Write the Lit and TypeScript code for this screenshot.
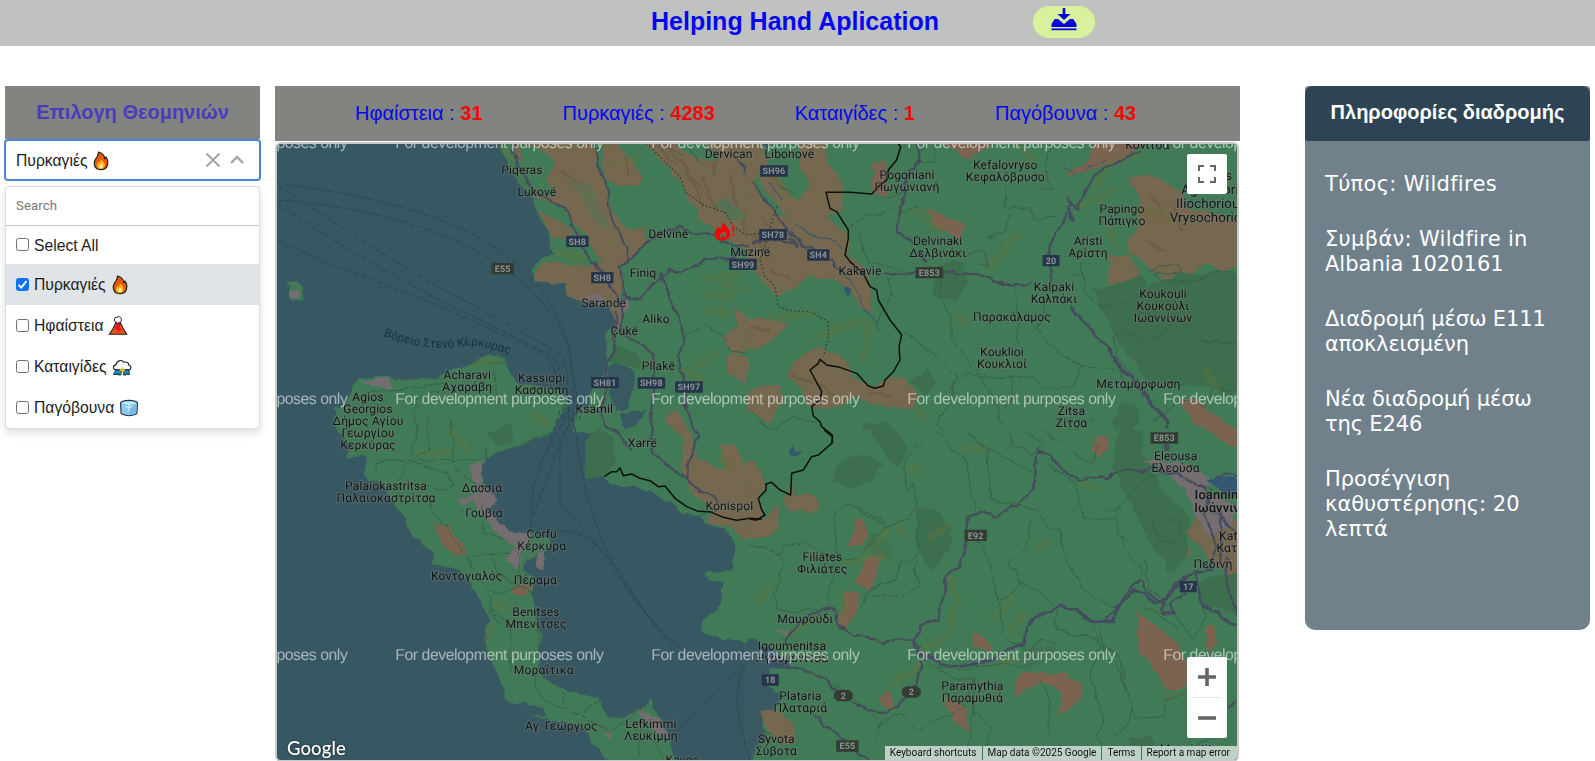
import { LitElement, html, svg, css } from "lit";
import { customElement, property } from "lit/decorators.js";

type Label = [number, number, string[], number?];
type Shield = [number, number, string, string];

const ROW = 36;

/* Place names: centre x, first baseline, lines, size. One unit is a third of a pixel. */
const labelsNW: Label[] = [
  [756, 282, ["Piqeras"]], [801, 348, ["Lukovë"]], [1376, 233, ["Dervican"]],
  [1195, 474, ["Delvinë"]], [1441, 528, ["Muzinë"]], [1119, 591, ["Finiq"]],
  [1001, 681, ["Sarandë"]], [1158, 728, ["Aliko"]], [1063, 765, ["Çukë"]],
  [1165, 869, ["Pllakë"]], [592, 897, ["Acharavi", "Αχαράβη"]], [815, 906, ["Kassiopi", "Κασσιόπη"]],
  [973, 999, ["Ksamil"]],
  [294, 963, ["Agios", "Georgios", "Δήμος Αγίου", "Γεωργίου", "Κερκύρας"]],
];
const labelsNE: Label[] = [
  [118, 84, ["Libohovë"]], [471, 147, ["Pogoniani", "Πωγωνιανή"]], [766, 117, ["Kefalovryso", "Κεφαλόβρυσο"]],
  [1192, 58, ["Κόνιτσα"]], [1116, 249, ["Papingo", "Πάπιγκο"]], [1014, 345, ["Aristi", "Αρίστη"]],
  [563, 345, ["Delvinaki", "Δελβινάκι"]], [330, 435, ["Kakavie"]], [912, 483, ["Kalpaki", "Καλπάκι"]],
  [786, 573, ["Παρακάλαμος"]], [1239, 504, ["Koukouli", "Κουκούλι", "Ιωαννίνων"]],
  [756, 678, ["Kouklioi", "Κουκλιοί"]], [1165, 775, ["Μεταμόρφωση"]], [964, 856, ["Zitsa", "Ζίτσα"]],
];
const labelsSW: Label[] = [
  [1117, 111, ["Xarrë"]], [348, 240, ["Palaiokastritsa", "Παλαιοκαστρίτσα"]], [636, 246, ["Δασσιά"]],
  [642, 321, ["Γουβιά"]], [815, 384, ["Corfu", "Κέρκυρα"]], [590, 510, ["Κοντογιαλός"]],
  [796, 522, ["Πέραμα"]], [798, 618, ["Benitses", "Μπενίτσες"]], [821, 792, ["Μοραΐτικα"]],
  [874, 960, ["Αγ. Γεώργιος"]], [1143, 954, ["Lefkimmi", "Λευκίμμη"]], [1237, 1062, ["Κavos"]],
  [1378, 300, ["Konispol"]],
];
const labelsSE: Label[] = [
  [1277, 90, ["Eleousa", "Ελεούσα"]], [217, 393, ["Filiates", "Φιλιάτες"]], [166, 579, ["Μαυρούδι"]],
  [126, 660, ["Igoumenitsa", "Ηγουμενίτσα"]], [151, 810, ["Plataria", "Πλαταριά"]], [79, 939, ["Syvota", "Σύβοτα"]],
  [667, 780, ["Paramythia", "Παραμυθιά"]], [1389, 413, ["Πεδινή"]], [1327, 969, ["Mousiotitsa"]],
];
const shieldsNW: Shield[] = [
  [922, 484, "SH8", "sh"], [997, 593, "SH8", "sh"], [698, 566, "E55", "e"], [1419, 553, "SH99", "sh"],
  [1005, 908, "SH81", "sh"], [1144, 909, "SH98", "sh"], [1257, 921, "SH97", "sh"],
];
const shieldsNE: Shield[] = [
  [72, 123, "SH96", "sh"], [69, 314, "SH78", "sh"], [205, 375, "SH4", "sh"],
  [538, 428, "E853", "e"], [903, 392, "20", "sh"],
];
const shieldsSE: Shield[] = [
  [1243, 24, "E853", "e"], [677, 316, "E92", "e"], [1315, 470, "17", "sh"],
  [61, 750, "18", "sh"], [292, 948, "E55", "e"], [280, 797, "2", "e"], [484, 786, "2", "e"],
];

const drawLabels = (list: Label[]) => list.map(([x, y, lines, size]) =>
  lines.map((t, i) => svg`<text class="place" x=${x} y=${y + i * ROW} font-size=${size ?? 36.5}>${t}</text>`));

const drawShields = (list: Shield[]) => list.map(([x, y, t, kind]) => {
  const w = t.length * 16 + 19;
  const plate = t.length === 1
    ? svg`<path class="shield e" d="M${x - 28} ${y - 8}L${x - 16} ${y - 17}H${x + 16}L${x + 28} ${y - 8}V${y + 8}L${x + 16} ${y + 17}H${x - 16}L${x - 28} ${y + 8}Z"></path>`
    : svg`<rect class="shield ${kind}" x=${x - w / 2} y=${y - 17} width=${w} height="34" rx="2"></rect>`;
  return svg`${plate}<text class="shield-text" x=${x} y=${y + 10}>${t}</text>`;
});

@customElement("hazard-icon")
export class HazardIcon extends LitElement {
  @property() kind = "fire";
  static styles = css`
    :host { display: inline-block; width: 20px; height: 20px; }
    svg { display: block; width: 20px; height: 20px; }
  `;
  render() {
    const art: Record<string, unknown> = {
      fire: svg`<path d="M7.5 1.2C11.5 2 13.6 5 13.7 7.5L15 6.2C17 9 17.2 12 16.3 14.7C15.2 17.5 12.8 18.7 10 18.7C6.3 18.7 3.6 16.4 3.3 12.8C3 9.5 4.5 8 6 6C7 4.5 7.6 3 7.5 1.2Z" fill="#e8590c" stroke="#221" stroke-width="1.2"/>
        <path d="M9.8 8.5C12.6 10 14 12.4 13.7 14.5C13.4 17 11.7 18 9.8 18C7.5 18 5.9 16.6 6 14.4C6.1 12.7 7.2 11.9 7.5 10.6L9 12Z" fill="#ffb31a"/>
        <path d="M10 12.5C11.8 14 12 15.3 11.6 16.4C11 17.6 8.8 17.7 8.2 16.3C7.8 15 9 14 10 12.5Z" fill="#fff0a0"/>`,
      volcano: svg`<path d="M1.3 18.3L4.8 13L8 6.5H12.2L15.5 13L18.7 18.3Z" fill="#e8501c" stroke="#221" stroke-width="1.1"/>
        <path d="M8.6 6.5H11.5L12 11L13.5 15L11.5 14L10.5 17L8.7 12.5L6.8 14.2Z" fill="#e8102c"/>
        <path d="M6.5 4.8C5.6 2.2 7.7 .8 9 1.4C10.5 0 13 .8 13.1 2.7C14.3 4.4 13 6 11.8 5.8L12.1 8.2L10.5 6.6L9 7.8L8.3 5.9C7.5 6.1 6.8 5.7 6.5 4.8Z" fill="#fff" stroke="#222" stroke-width="1"/>`,
      storm: svg`<path d="M3.8 12.8C.6 12.3.8 8.2 4 7.9C4.2 4 9.5 1.9 12 5.3C15 4.2 17 6 16.6 8C20 8.7 19.3 12.9 16.5 12.9Z" fill="#fff" stroke="#222" stroke-width="1.1"/>
        <path d="M3.8 13L1.5 17.5H5.5L6 16L6.5 18H9L9.5 13ZM12 13L11.5 18H14L14.6 16L15.5 17.6H17.5L16.8 13Z" fill="#129ac5" stroke="#123" stroke-width=".9"/>
        <path d="M11.5 9L7 14H10L8.5 18L13.8 12.4H10.8Z" fill="#fcc21b"/>`,
      ice: svg`<path d="M3 3.6Q10 1.2 17 3.6Q18.6 4.2 18.5 6L18 14.5Q18 15.8 16.8 16.3Q10 19.2 3.2 16.3Q2 15.8 2 14.5L1.5 6Q1.4 4.2 3 3.6Z" fill="#8cc9ee" stroke="#234" stroke-width="1.1"/>
        <path d="M2.8 5Q10 2.2 17.2 5Q10 8 2.8 5Z" fill="#c5e9fa"/><path d="M10.5 8V17.3Q14 17 17 15.3L17.6 6.4Q14 8 10.5 8Z" fill="#79b9e6"/>
        <path d="M10 6V13M6.5 8.5L10 9.6L13.5 8.5" stroke="#e2f6ff" stroke-width="1" fill="none"/>`,
    };
    return html`<svg viewBox="0 0 20 20">${art[this.kind]}</svg>`;
  }
}

@customElement("hazard-select")
export class HazardSelect extends LitElement {
  static styles = css`
    :host { display: block; width: 257px; font: 15.7px/20px "Liberation Sans", Arial, sans-serif; color: #1c1c1c; }
    .title { margin: 0 1px; height: 53px; display: flex; align-items: center; justify-content: center; background: #82847f;
      color: #4a3cbe; font-size: 20px; font-weight: 700; }
    .title span { display: block; padding-bottom: 2px; }
    .box { box-sizing: border-box; height: 42px; border: 2px solid #4c83dc; border-radius: 4px; display: flex; align-items: center;
      padding: 0 14px 0 10px; background: #fff; }
    .box .value { flex: 1; display: flex; align-items: center; gap: 4px; padding-top: 1px; }
    .box svg { display: block; }
    .box .arrow { margin-left: 8px; }
    .list { margin: 5px 1px 0; border: 1px solid #dcdcdc; border-radius: 4px; box-shadow: 0 4px 10px rgba(0,0,0,.13); background: #fff; overflow: hidden; }
    .search { height: 36px; display: flex; align-items: center; padding: 0 0 2px 10px; border-bottom: 1px solid #c8c8c8;
      color: #777; font: 13.2px Roboto, sans-serif; letter-spacing: .1px; }
    .row { height: 41px; display: flex; align-items: center; padding-left: 10px; }
    .row.first { height: 38px; }
    .row.on { background: #e0e3e8; }
    .row .name { padding-top: 1px; }
    .check { box-sizing: border-box; width: 13px; height: 13px; border: 1px solid #707070; border-radius: 2.5px; background: #fff; margin: 0 5px 1px 0; }
    .check.on { background: #0b74f5; border-color: #0b74f5; }
    .check svg { display: block; width: 11px; height: 11px; }
    hazard-icon { margin: 1px 0 0 5px; }
    .box hazard-icon { margin: 0; }
  `;
  private rows = [
    { name: "Πυρκαγιές", icon: "fire", on: true },
    { name: "Ηφαίστεια", icon: "volcano", on: false },
    { name: "Καταιγίδες", icon: "storm", on: false },
    { name: "Παγόβουνα", icon: "ice", on: false },
  ];
  render() {
    return html`
      <div class="title"><span>Επιλογη Θεομηνιών</span></div>
      <div class="box">
        <span class="value">Πυρκαγιές <hazard-icon kind="fire"></hazard-icon></span>
        <svg width="16" height="16" viewBox="0 0 16 16" fill="none" stroke="#a5a5a5" stroke-width="2"><path d="M1.5 1.5L14.5 14.5M14.5 1.5L1.5 14.5"/></svg>
        <svg class="arrow" width="16" height="16" viewBox="0 0 16 16" fill="none" stroke="#a5a5a5" stroke-width="2.4"><path d="M2 11L8 5L14 11"/></svg>
      </div>
      <div class="list">
        <div class="search">Search</div>
        <div class="row first"><span class="check"></span><span class="name">Select All</span></div>
        ${this.rows.map((r) => html`<div class="row ${r.on ? "on" : ""}">
          <span class="check ${r.on ? "on" : ""}">${r.on ? html`<svg viewBox="0 0 11 11" fill="none" stroke="#fff" stroke-width="1.9"><path d="M1.5 5.8L4.2 8.5L9.5 2.2"/></svg>` : ""}</span>
          <span class="name">${r.name}</span><hazard-icon kind=${r.icon}></hazard-icon></div>`)}
      </div>`;
  }
}

@customElement("hazard-map")
export class HazardMap extends LitElement {
  static styles = css`
    :host { display: block; position: relative; box-sizing: border-box; width: 964px; height: 620px; margin-top: 1px;
      border: 2px solid #c8cac9; border-radius: 6px; overflow: hidden; background: #375862; }
    .canvas { display: block; width: 960px; height: 616px; text-rendering: geometricPrecision; }
    .land { fill: #417a57; }
    .sea { fill: #375862; }
    .lake { fill: #345772; }
    .brown { fill: #766750; }
    .rust { fill: #7b644f; }
    .dark { fill: #3e6e4e; }
    .town { fill: #746d70; }
    .hill { fill: none; stroke: #66763a; stroke-width: 22; opacity: .34; stroke-linecap: round; }
    .ridge { fill: none; stroke: #5f5b43; stroke-width: 8; opacity: .45; }
    .stream { fill: none; stroke: #36586a; stroke-width: 4; opacity: .8; }
    .local { fill: none; stroke: #38604a; stroke-width: 3; }
    .road { fill: none; stroke: #454c5c; stroke-width: 6.5; stroke-linejoin: round; }
    .high { fill: none; stroke: #454c5f; stroke-width: 9; stroke-linejoin: round; }
    .border { fill: none; stroke: #0b100d; stroke-width: 4.5; stroke-linejoin: round; }
    .dots { fill: none; stroke: #2a3a31; stroke-width: 3.5; stroke-dasharray: 5 7; }
    .ferry { fill: none; stroke: #2a4652; stroke-width: 2.8; stroke-dasharray: 17 8; }
    .place { font-family: Roboto, "Noto Sans", sans-serif; fill: #121515; text-anchor: middle; letter-spacing: .25px;
      paint-order: stroke; stroke: rgba(125,130,125,.38); stroke-width: 7px; stroke-linejoin: round; }
    .strait { font: 35px Roboto, sans-serif; fill: #17303c; letter-spacing: .3px; }
    .sh { fill: #26364a; }
    .e { fill: #333c30; }
    .shield-text { font: 700 27px Roboto, sans-serif; fill: #8c9296; text-anchor: middle; letter-spacing: .4px; }
    .mark { font: 15.8px "Liberation Sans", Arial, sans-serif; fill: rgba(255,255,255,.55); }
    .control { position: absolute; right: 10px; width: 40px; background: #fff; border-radius: 2px; }
    .full { top: 10px; height: 40px; display: grid; place-items: center; }
    .zoom { top: 513px; height: 81px; display: grid; grid-template-rows: 40px 1px 40px; justify-items: center; align-items: center; }
    .zoom i { width: 30px; height: 1px; background: #e6e6e6; }
    .google { position: absolute; left: 10px; bottom: 1px; color: #fff; font: 500 18.5px/22px Lato, sans-serif; text-shadow: 0 0 3px rgba(0,0,0,.6); letter-spacing: .1px; }
    .legal { position: absolute; right: 0; bottom: 0; height: 14px; display: flex; gap: 1px; font: 10px/14px Roboto, sans-serif; color: #111; }
    .legal span { background: rgba(196,214,202,.95); padding: 0 5px; }
    .legal span:last-child { padding-right: 7px; }
  `;
  render() {
    const marks = [148, 404, 660].flatMap((y) => [139.3, 395.3, 651.3, 907.3, 1163.3].map((x) => svg`<text class="mark" x=${x} y=${y} textLength="208.5">For development purposes only</text>`));
    return html`
      <svg class="canvas" viewBox="277 144 960 616">
        <defs>
          <filter id="rough" x="-2%" y="-2%" width="104%" height="104%"><feTurbulence type="fractalNoise" baseFrequency=".07" numOctaves="3" seed="4"/><feDisplacementMap in="SourceGraphic" scale="8" xChannelSelector="R" yChannelSelector="G"/></filter>
        </defs>
        <g filter="url(#rough)">
          <g transform="translate(270 80) scale(.33333)">
            <path class="land" d="M685 150L710 240L745 310L790 350L800 400L835 450L848 520L815 535L785 570L790 595L885 612L895 645L930 665L1000 660L1032 690L1035 740L1010 760L1005 800L1015 870L975 910L950 975L920 985L915 1060H1500V150Z"/>
            <path class="land" d="M205 1060L192 1020L222 970L240 930L270 895L340 890L400 905L440 890L500 895L540 870L600 860L655 820L710 835L720 880L740 910L800 915L850 930L892 950L870 1010L850 1060Z"/>
            <path class="land" d="M50 608L75 602L102 620L103 640L95 662L62 655Z"/><path class="town" d="M60 635L90 632L92 655L62 652Z"/>
            <path class="sea" d="M1035 845L1090 868L1102 900L1085 940L1070 1000L1045 1012L1030 975L1015 930L1012 875Z"/>
            <path class="dark" d="M1035 795L1085 815L1110 840L1110 865L1050 848L1020 850Z"/>
            <path class="brown" d="M728 190H970L990 280L1010 340L1030 400L1080 450L1120 440L1135 480L1080 540L1040 560L1060 620L1040 660L1055 700L1060 760L1030 720L1020 675L930 665L895 645L885 612L845 612L790 592L810 555L850 542L960 560L995 550L970 500L910 420L870 380L800 350L830 320L790 280L740 240Z"/>
            <path class="brown" d="M800 390L880 425L905 450L900 480L850 470Z"/><path class="brown" d="M1000 190H1040L1110 270L1110 310L1050 320L1000 290Z"/>
            <path class="land" d="M745 200L800 195L850 250L830 300L860 350L800 340L760 290Z"/>
            <path class="land" d="M900 300L960 310L1000 400L1030 460L990 440L940 370Z" opacity=".35"/>
            <path class="brown" d="M1130 190H1500V545L1440 535L1400 490L1340 455L1290 410L1250 360L1230 300L1180 250Z"/>
            <path class="land" d="M1210 190L1260 220L1310 245L1350 235L1310 190ZM1430 255L1500 220V310L1460 300Z"/>
            <path class="land" d="M1330 380L1410 430L1430 410L1360 350Z" opacity=".6"/>
            <path class="brown" d="M1390 680L1500 740V820H1390L1350 780L1400 740Z"/><path class="brown" d="M1375 820L1430 830L1440 870L1500 890V960L1440 950L1420 900L1370 880Z"/><path class="brown" d="M1190 985L1230 1000L1220 1040L1180 1030Z"/>
            <path class="town" d="M1040 665L1075 655L1078 690L1050 700ZM270 900L350 895L370 925L310 920ZM930 650L1000 645L1010 670L940 668Z"/>
            <path class="hill" d="M1040 250L1100 235M1300 600L1400 580M1310 640L1380 650M1320 690L1370 700M860 520L940 535M700 205L730 230M1290 850L1330 820M620 850L680 840M1360 610L1440 640M1250 870L1290 900"/>
            <path class="ridge" d="M1160 200L1220 260M1200 210L1270 300M1260 280L1300 380M1300 290L1340 400M1380 280L1400 380M1440 350L1420 450M1340 215L1330 280M1180 190L1240 230M1230 240L1300 330M870 270L930 310M1060 230L1080 290"/>
            <path class="local" d="M1245 770L1310 735L1350 760L1380 810L1470 820M650 850L710 845L720 870M280 940L400 925L520 910M1250 190L1300 260M430 1020L440 960L520 930M670 870L680 920L690 1020M1000 1010L1040 950"/>
            <path class="road" d="M740 190L730 215L745 260L765 290L780 320L870 380L905 410L912 460L945 510L990 570L1040 640L1060 690L1055 740L1070 770L1150 815V860L1148 1060M1040 690L1035 770L1030 820L1010 855L1000 960L1000 1060M980 190L980 240L1010 330L1020 410L1060 480L1075 545L1045 560L1060 640L1080 660L1110 655L1165 600L1200 570L1260 570L1300 540L1380 535L1470 490M1075 540L1120 500L1160 465L1230 440L1280 465L1340 460L1350 485L1430 500L1480 480M1170 580L1190 640L1225 710L1245 780L1220 830L1240 880L1255 1060M1400 240L1440 290L1480 350"/>
          </g>
          <g transform="translate(270 410) scale(.33333)">
            <path class="land" d="M190 0L215 60L235 110L232 140L290 140L275 190L290 215L340 222L365 270L385 300L400 320L420 370L490 430L490 462L570 480L615 540L640 590L660 630L645 660L660 740L690 810L710 870L760 895L790 920L850 930L930 945L985 1020L1020 1060H1215L1200 990L1150 890L1140 860L1120 895L1040 930L1010 925L985 862L930 850L840 820L800 770L815 690L800 610L790 550L790 500L760 480L780 440L800 430L800 470L820 480L825 430L840 390L790 375L740 370L680 335L650 310L675 270L640 215L635 180L650 150L700 125L780 95L830 80L855 40L850 0Z"/>
            <path class="sea" d="M720 882L770 875L820 900L835 920L790 915Z"/>
            <path class="land" d="M920 0L930 40L980 45L980 60L950 90L945 205L1000 205L1015 222L1090 230L1150 250L1195 270L1240 310L1285 318L1310 345L1360 350L1400 400L1385 480L1300 490L1310 510L1360 520L1345 600L1310 620L1290 660L1360 690L1440 698L1500 690V0Z"/>
            <path class="sea" d="M1050 10L1130 0L1110 40L1060 60Z"/>
            <path class="dark" d="M950 90L990 50L1030 90L1035 160L1000 205L945 205Z"/><path class="dark" d="M650 65L720 45L728 95L680 110Z"/>
            <path class="brown" d="M1180 20L1220 0L1270 80L1280 150L1370 180L1350 100L1400 110L1420 160L1500 190V350L1430 390L1370 345L1310 340L1330 300L1260 240L1240 190L1240 90Z"/>
            <path class="rust" d="M490 345L530 350L580 400L590 425L560 435L520 410ZM720 540L760 520L790 530L780 555L730 550Z"/>
            <path class="town" d="M600 170L640 155L632 215L680 270L650 300L690 340L740 370L780 375L760 430L750 480L700 450L740 410L690 380L640 320L610 270L570 285L565 265L620 250ZM795 430L825 430L820 480L800 470ZM1000 960L1030 965L1020 985ZM1100 900L1160 920L1200 990L1150 960Z"/>
            <path class="hill" d="M450 130L530 125M800 20L835 40M540 60L600 120M680 580L710 600M670 650L650 690M1350 130L1380 180"/>
            <path class="local" d="M430 0L440 60L420 150L320 155L325 200M480 0L470 60L480 120L430 150M540 30L550 100L540 150L440 155M540 155L650 145L760 100L830 75M650 145L640 110M380 210L420 155L530 190L555 230L510 240L470 225M540 150L560 180L640 230M470 260L490 310L560 400L600 440L660 430L720 430L750 410M640 280L640 370L700 390M590 440L620 490L650 540L700 545L750 530L790 550M660 430L690 500L750 530V430M660 550L665 600L720 640L720 780M800 600L810 750M655 600L690 640M800 770L790 830L830 880L860 890L940 920L1020 965L1060 940L1110 900M880 890L890 850L850 810M940 910L990 870M1100 1050L1110 940M1190 1060L1130 960M1280 320L1340 300"/>
            <path class="road" d="M990 0L1000 40L1030 60L1070 105L1090 125M1145 0V60L1140 110L1170 150L1240 200L1290 245L1350 270M1250 0L1285 80L1260 140L1250 205"/>
          </g>
          <g transform="translate(750 130) scale(.33333)">
            <path class="land" d="M0 0H1500V940H-10V0Z"/>
            <path class="brown" d="M-10 0H20L60 120L100 160L120 200L180 260L240 270L290 310L300 380L350 420L370 550L320 510L260 450L190 440L80 500L30 440L-10 410Z"/>
            <path class="brown" d="M150 30H220L230 100L280 160L275 240L220 270L180 290L120 200L150 210L175 170L150 110Z"/>
            <path class="land" d="M20 120L50 180L110 260L80 250L10 170Z"/>
            <path class="rust" d="M530 230L580 255L640 290L635 330L600 310L560 295ZM580 40H730L650 90ZM1030 30H1190L1130 80L1060 110L950 140L950 125L1020 100ZM370 100L410 90V200L365 190Z"/>
            <path class="brown" d="M1130 150L1190 130L1290 180L1310 230L1500 280V400L1420 420L1370 400L1320 440L1240 450L1190 400L1140 370L1130 340L1160 300L1170 200ZM1080 380L1130 370L1170 420L1150 510L1130 515L1070 460ZM160 670L210 650L290 690L310 750L330 800L230 840L180 830L150 770L110 730ZM-10 570L120 575L80 620L20 660L-10 655ZM20 770L90 765L100 810L60 880L-10 840V790ZM310 740L370 775L420 740L470 750L510 800L480 840L390 830L320 800Z"/>
            <path class="rust" d="M1290 810L1330 800L1400 860L1470 900V940L1330 880Z"/>
            <path class="dark" d="M540 480L570 400L640 390L655 450L620 510L560 500Z"/><path class="dark" d="M1030 480L1170 440L1190 470L1290 430L1350 430L1420 420L1500 450V760L1440 800L1380 770L1200 760L1150 700L1090 610Z"/><path class="dark" d="M1110 820L1150 810L1170 850L1150 900L1180 940H1100L1090 880ZM340 880L410 870L440 900L430 940H350ZM480 760L530 710L560 760L530 790Z"/>
            <path class="hill" d="M1040 170L1080 100L1170 70M990 230L1080 180M1150 240L1230 250M720 410L800 320M490 240L570 290M620 560L640 580M200 620L290 580M340 690L360 580M60 560L180 550M1080 290L1090 340M1370 730L1400 770M500 840L530 860M60 130L120 200M250 600L340 570M800 40L850 90M1380 130L1440 160"/>
            <path class="ridge" d="M30 260L90 330M10 310L60 380M60 420L120 450M120 730L190 760M200 760L260 800M350 790L430 800M1200 190L1240 250M1270 230L1300 300M1190 330L1250 370M0 590L60 600"/>
            <path class="lake" d="M280 470L300 480L298 495L280 490ZM30 45H60L50 60Z"/>
            <path class="stream" d="M140 285L180 312L250 330L275 360M270 420L330 490L360 560L390 605M60 160L100 210M940 105L975 138M1010 118L1070 95"/>
            <path class="local" d="M130 190L70 150M400 200L450 190L500 90L550 100L560 40M300 290L340 260L430 240M440 250L500 230L520 250M500 60L530 50M770 160L760 230L830 240L870 270L920 260M870 180L910 180L890 130L900 40M640 380L700 360L720 410L690 400M710 320L770 310L775 250M330 300L350 390L440 420L490 430M410 440L430 500L390 550L380 590M800 470L800 560L810 650M570 440L570 500L600 560L600 620L650 690L690 740L720 790L760 880L800 940M455 610L540 660L620 740L590 830L560 880L620 940M690 740L650 730L600 780M870 600L900 650L990 710L970 770L880 780L850 740L700 740L680 710M990 710L1110 720L1120 750M990 400L1000 460L1030 520L1060 530L1120 520L1200 560M1090 620L1120 600L1190 640L1290 570L1350 630L1460 640M1090 620L1100 680L1150 740M1210 870L1300 810L1360 830L1400 770L1460 790M780 730L790 800L760 840M0 840L60 900L130 860L200 880M890 470L880 560L860 600M960 430L1000 440M1200 420L1280 400L1290 430L1210 430L1230 450L1310 460L1410 420L1460 430M980 940L970 900L1030 860"/>
            <path class="road" d="M0 150L50 210L90 270L130 320L170 350L240 390L270 415M500 40L510 90L475 130L455 220L440 300L490 340M400 430L430 440L490 428L650 430L690 440L760 465L810 465L850 462M900 450L895 350L930 290L950 250M530 400L510 360M0 340L60 330L130 340M1170 60L1040 130L1000 190L985 240L945 200"/>
            <path class="high" d="M960 225V275M955 530L1020 590L1060 640L1120 720L1150 750L1180 800L1250 870V940M120 325L150 350"/>
          </g>
          <g transform="translate(750 430) scale(.33333)">
            <path class="land" d="M0 0H1500V1010H-10V0Z"/>
            <path class="sea" d="M-10 620L20 630L50 665L100 690L120 715L60 715L50 760L90 800L70 845L35 845L45 920L20 950L5 1010H-10Z"/>
            <path class="brown" d="M-10 90L20 95L45 170L25 200L45 270L80 225L85 300L60 320L-10 325ZM100 205L170 190L210 210L210 240L180 250L100 230ZM120 150L135 195L110 200ZM30 840L80 845L130 880L135 930L100 950L50 900Z"/>
            <path class="rust" d="M320 260L345 270L360 320L340 350L295 345ZM360 375L400 370L375 440L360 480L315 460ZM290 490L330 485L315 560L290 600L255 590ZM670 600L730 650L720 665L665 650ZM380 800L410 780L435 800L430 845L395 830ZM1160 550L1210 580L1280 640L1310 700L1330 740L1290 780L1240 775L1220 730L1165 660ZM1370 590L1395 585L1400 640L1385 670L1368 640ZM790 790L810 730L870 725L950 730L1000 770L990 810L920 860L940 790L890 755L840 770L800 800ZM585 800L650 830L660 900L630 890L590 830ZM1370 0H1470V55L1420 40ZM1210 205L1240 195L1258 215L1215 260ZM1270 300L1310 320L1320 370L1300 395L1240 350L1270 340ZM1035 25L1065 20L1075 60L1045 85L1025 60ZM1430 380L1470 390V440L1430 460Z"/>
            <path class="dark" d="M250 110L340 70L400 100L370 150L330 170L250 160ZM360 0H440L480 60L450 110L400 70ZM500 230L560 240L605 300L600 360L545 420L500 350ZM1105 0H1180V70L1230 170L1320 260L1310 380L1270 440L1200 340L1130 200L1090 120ZM1340 460L1470 420V560L1360 520ZM1140 920L1200 915L1220 950H1140Z"/>
            <path class="dark" opacity=".6" d="M360 310L400 320L430 350L420 390L380 380L350 360ZM820 650L920 640L900 700L820 720Z"/>
            <path class="brown" d="M1340 250L1400 240L1470 280V420L1400 410L1360 360L1310 310Z"/><path class="town" d="M1160 90L1210 90L1330 110L1370 140L1380 190L1460 230L1440 290L1380 320L1340 260L1300 170L1230 110ZM80 605L125 600L110 620ZM1345 120L1390 150L1370 200L1310 170Z"/>
            <path class="lake" d="M1370 150L1400 135L1460 150V200L1410 180ZM110 70L125 50L130 65L155 65L140 78ZM20 640L100 680L125 715L60 710Z"/>
            <path class="hill" d="M600 450L630 520M610 540L600 590M280 500L270 580M410 310L350 360M480 130L500 110M440 290L460 310M590 620L520 660M780 600L820 550M520 700L430 760M290 400L400 380M120 610L200 560M730 560L780 500M860 350L890 340M1250 800L1290 790M640 50L700 60M540 320L590 290M60 470L30 520M1000 160L1040 180M760 700L790 690"/>
            <path class="local" d="M0 345L90 370L110 340L170 340L210 370L260 385L320 385L410 290L340 250L300 220L250 240L260 380L230 530L140 545L80 540L75 470L100 400L90 370M410 290L470 270L500 230L490 160L465 180L470 90L540 0M300 220L410 280M500 230L505 380L490 430L510 470L450 500L360 495M560 0L600 50L650 90L660 180L680 240M500 380L450 400L440 450L370 470L320 540M650 10L710 60L720 210L780 220L860 240L890 290L930 300L940 370L990 470L1070 520L1100 530M690 40L860 130M830 0L880 50L840 70L790 50L780 0M670 310L720 400L740 490L760 600L790 640L830 660L870 630L920 640M750 510L820 460L900 510L920 530M840 270L830 350L780 400L820 470M900 110L980 160L1000 260L1100 270L1120 350L1180 430M880 0L960 60L1020 100L1050 40M1100 270L1105 230L1180 150L1230 130M1120 230L1060 240M1210 260L1220 330L1280 340L1300 280L1210 270M1180 390L1200 470L1280 560L1330 630L1370 560L1350 500M1030 590L1050 650L1020 720L1060 880L1040 920L1080 980M1050 590L1060 650L1100 700L1150 830L1130 890L1080 930M920 540V600L1010 620L1110 680L1130 780L1160 860L1240 860L1250 810L1310 790M0 880L60 910M380 930L390 870L300 800L250 760M500 670L600 740L670 750L640 830L500 900L450 850L380 890M670 740L670 860L650 960M670 850L720 890L710 960M870 750L900 800L890 900L920 940L980 990M1380 920L1300 970M540 680L570 710L640 720L740 700L820 710M1180 520L1280 590M1300 150L1390 180L1370 240L1420 260"/>
            <path class="road" d="M105 640L130 590L190 550L225 530L255 545L255 585L300 605L310 615L370 625L400 640L440 625L490 630L510 595L540 570L565 575L590 440L625 410L650 330L655 260L710 245L740 262L780 230L805 232L840 190L855 150L862 65L900 75L940 125L990 145L1040 135L1070 145L1120 115L1180 125L1210 115L1300 140L1370 180L1380 230M500 650L520 710L500 760L440 830L405 850L300 820L250 770L160 715L100 710L60 680M190 855L280 930L360 1000M1330 430L1230 520L1170 450L1130 490L1070 570M1310 490L1260 520L1270 550L1240 550L1240 500M1430 380V460L1460 560M1360 240L1400 350L1370 420M1400 240L1420 290L1410 400M1400 140L1430 130L1470 150M1460 810L1400 850M1400 240L1470 330M1250 40V60"/>
            <path class="high" d="M490 630L500 665L600 710L690 700L720 685L790 655L820 640L830 590L870 555L930 525L980 540L1030 575L1090 578L1100 530L1150 485L1190 490L1220 525L1260 480L1330 430L1390 420M1335 430L1350 510L1400 550L1460 590M650 270H660"/>
          </g>
        </g>
        <g transform="translate(270 80) scale(.33333)">
          <path class="ferry" d="M22 310C260 340 470 390 620 470C790 560 870 700 890 780C910 870 925 960 930 1020M22 360C250 375 520 440 680 550C820 640 880 740 900 820L920 1020M22 315C200 430 400 570 600 670L870 820Q900 850 895 1020M22 370C180 480 370 590 550 680L850 830Q880 870 880 1020M22 480C200 570 440 640 620 730L800 810Q860 840 865 930"/>
          <path id="straitline" fill="none" d="M340 768Q480 820 600 795Q660 800 740 830"/>
          <text class="strait"><textPath href="#straitline">Βόρειο Στενό Κέρκυρας</textPath></text>
          <path class="dots" d="M1130 190L1180 240L1230 290L1250 340L1300 375L1370 400L1390 440L1430 465L1470 460"/>
          ${drawLabels(labelsNW)}${drawShields(shieldsNW)}
        </g>
        <g transform="translate(270 410) scale(.33333)">
          <path class="ferry" d="M900 0L820 140L790 230L780 370M915 0L850 150L790 320M925 0L870 90V280C920 330 960 380 1010 440C1080 560 1140 640 1230 710M915 50C930 200 960 300 1000 400C1060 530 1140 630 1220 710M850 365C930 350 980 400 1040 470C1100 570 1150 650 1210 710M1230 955L1430 755M1425 770C1380 850 1410 950 1440 1053M870 0L830 130"/>
          <path class="border" d="M1003 200L1025 185H1040L1050 174L1060 197L1085 192L1110 205L1140 212L1165 230L1185 228L1215 265L1250 290L1285 304L1320 305L1360 322L1400 331L1440 325L1475 328"/>
          ${drawLabels(labelsSW)}
        </g>
        <g transform="translate(750 130) scale(.33333)">
          <path class="border" d="M440 35L452 50L440 90L415 120L410 150L385 170L365 192L300 187L228 187L240 235L260 245L295 300V325L285 375L300 395L340 430L360 470L380 480L385 510L420 570L455 615L447 650L450 690L430 725L405 750L400 768L375 775L355 768L320 730L270 712L230 705L210 688L205 700L180 720L215 785L210 810L185 830L190 858L210 875L215 890L247 915V940"/>
          <path class="dots" d="M80 230L50 330L30 390L45 440L75 470L85 530L120 542L180 545L235 575L235 620L220 680"/>
          ${drawLabels(labelsNE)}${drawShields(shieldsNE)}
          <text class="place" x="1395" y="150" font-size="40">Agios</text>
          <text class="place" x="1380" y="192" font-size="40">Agiochori</text>
          <text class="place" x="1384" y="234" font-size="40">Iliochoriou -</text>
          <text class="place" x="1378" y="276" font-size="40">Vrysochoriou</text>
        </g>
        <g transform="translate(750 430) scale(.33333)">
          <path class="border" d="M222 0L248 20L245 40L205 75L185 80L160 120L125 130L122 195L90 180L65 157L48 162V180L25 205L35 240L45 255L20 270L0 268"/>
          ${drawLabels(labelsSE)}${drawShields(shieldsSE)}
          <text class="place" x="1410" y="208" font-size="39" font-weight="500">Ioannina</text>
          <text class="place" x="1412" y="247" font-size="39" font-weight="500">Ιωάννινα</text>
          <text class="place" x="1478" y="331" font-size="36.5">Katsikas</text>
          <text class="place" x="1478" y="367" font-size="36.5">Κατσικάς</text>
        </g>
        ${marks}
        <path d="M723 222C724 225 728 227 729.5 231C731.5 237 728 240.5 722 240.5C716 240.5 713 236 715.5 231C716.5 229 717.5 229 717.5 227L720.5 229C722 227 722.4 224 723 222ZM723.5 231C723.5 233.5 720.5 233 720 235.5C719.5 238 722 238.5 723 238C721.5 237 722.5 235.5 724 235C724.5 236.5 725 237 724.5 238C727.5 236.5 727 232.5 723.5 231Z" fill="#fb0007" fill-rule="evenodd"/>
        <path d="M732 225.5H734.6L734.2 232H732.4ZM732.2 233.8H734.4V236H732.2Z" fill="#e5141a"/>
      </svg>
      <div class="control full"><svg width="18" height="18" viewBox="0 0 18 18" fill="#666"><path d="M0 0H6V2H2V6H0ZM12 0H18V6H16V2H12ZM0 12H2V16H6V18H0ZM16 12H18V18H12V16H16Z"/></svg></div>
      <div class="control zoom">
        <svg width="18" height="18" viewBox="0 0 18 18" fill="#666"><path d="M7.2 0H10.8V7.2H18V10.8H10.8V18H7.2V10.8H0V7.2H7.2Z"/></svg><i></i>
        <svg width="18" height="18" viewBox="0 0 18 18" fill="#666"><path d="M0 7.2H18V10.8H0Z"/></svg>
      </div>
      <div class="google">Google</div>
      <div class="legal"><span>Keyboard shortcuts</span><span>Map data ©2025 Google</span><span>Terms</span><span>Report a map error</span></div>`;
  }
}

@customElement("app-root")
export class AppRoot extends LitElement {
  static styles = css`
    :host { display: block; height: 761px; overflow: hidden; background: #fff; font-family: "Liberation Sans", Arial, sans-serif; }
    .top { box-sizing: border-box; height: 46px; background: #c0c2bf; display: flex; align-items: center; padding: 0 0 2px 651px; gap: 94px; }
    h1 { margin: 0; padding-bottom: 2px; width: 288px; white-space: nowrap; font-size: 25px; line-height: 30px; color: #0505ef; }
    .save { width: 62px; height: 32px; border-radius: 16px; background: #d9f09c; display: grid; place-items: center; }
    .save svg { display: block; margin-bottom: 4px; }
    .main { display: flex; align-items: flex-start; padding: 40px 0 0 4px; }
    .centre { margin-left: 14px; width: 965px; }
    .stats { height: 55px; background: #82847f; display: flex; align-items: center; gap: 80px; padding-left: 80px; font-size: 20px; color: #0707ee; white-space: nowrap; }
    .stats b { color: #f20a0a; }
    .info { margin-left: 65px; width: 285px; height: 544px; background: #71818b; border-radius: 4px 4px 10px 10px; overflow: hidden; color: #fff; }
    .info h2 { margin: 0; height: 55px; line-height: 52px; text-align: center; background: #2d4455; border-radius: 8px 8px 3px 3px; font-size: 20px; }
    .body { padding: 31px 20px; font: 21px/25px "DejaVu Sans", Verdana, sans-serif; white-space: nowrap; }
    .body p { margin: 0 0 30px; }
    .wide { letter-spacing: .3px; }
    .tight { letter-spacing: -.15px; }
  `;
  render() {
    return html`
      <header class="top">
        <h1>Helping Hand Aplication</h1>
        <div class="save"><svg width="26" height="24" viewBox="0 0 26 24" fill="#0606dc"><path d="M11.7 0H14.3V6H19.5L13 12L6.5 6H11.7Z"/><path d="M3.8 11H7L13 16L19 11H22.2L25.5 16V19H.5V16Z"/><path d="M.5 20.4H25.5V22.2H.5Z"/></svg></div>
      </header>
      <main class="main">
        <hazard-select></hazard-select>
        <section class="centre">
          <div class="stats">
            <span>Ηφαίστεια : <b>31</b></span><span>Πυρκαγιές : <b>4283</b></span><span>Καταιγίδες : <b>1</b></span><span>Παγόβουνα : <b>43</b></span>
          </div>
          <hazard-map></hazard-map>
        </section>
        <aside class="info">
          <h2>Πληροφορίες διαδρομής</h2>
          <div class="body">
            <p class="wide">Τύπος: Wildfires</p>
            <p><span class="wide">Συμβάν: Wildfire in</span><br>Albania 1020161</p>
            <p class="tight">Διαδρομή μέσω E111<br>αποκλεισμένη</p>
            <p class="tight">Νέα διαδρομή μέσω<br>της E246</p>
            <p>Προσέγγιση<br>καθυστέρησης: 20<br>λεπτά</p>
          </div>
        </aside>
      </main>`;
  }
}
